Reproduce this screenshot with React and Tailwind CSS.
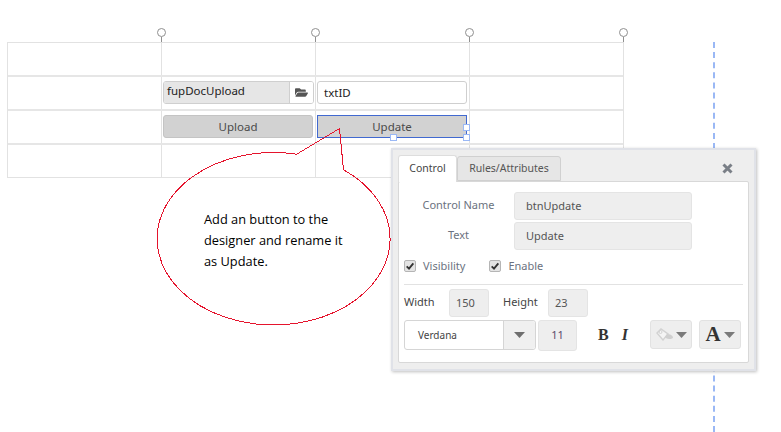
import { useState } from "react";
import { FaFolderOpen } from "react-icons/fa";

const uiFont = "font-['Noto_Sans',sans-serif]";
const columns = [161, 315, 469, 623];

const Caret = ({ color = "#6f6f6f" }) => (
  <svg viewBox="0 0 11 6" className="h-[6px] w-[11px]">
    <path d="M0 0h11L5.5 6z" fill={color} />
  </svg>
);

const Checkbox = ({ label, checked, onChange }) => (
  <label className="flex h-4 items-center gap-[7px]">
    <span className="flex h-3 w-3 items-center justify-center rounded-[2px] border border-[#b5b5b5] bg-[#e4e4e4]">
      <input type="checkbox" checked={checked} onChange={onChange} className="hidden" />
      {checked && (
        <svg viewBox="0 0 12 12" className="h-[10px] w-[10px]">
          <path d="M2 6.5 4.8 9.2 10 2.8" fill="none" stroke="#333" strokeWidth="2.2" />
        </svg>
      )}
    </span>
    <span className="text-[11px] text-[#6b7280]">{label}</span>
  </label>
);

const GridRow = ({ children, className }) => (
  <div className={`grid grid-cols-[154px_154px_154px_154px] ${className}`}>
    <div className="border-r border-[#e2e2e2]" />
    <div className="border-r border-[#e2e2e2]">{children?.[0]}</div>
    <div className="border-r border-[#e2e2e2]">{children?.[1]}</div>
    <div />
  </div>
);

const App = () => {
  const [visible, setVisible] = useState(true);
  const [enabled, setEnabled] = useState(true);

  return (
    <div className={`relative h-[432px] w-[781px] overflow-hidden bg-white ${uiFont}`}>
      {/* Designer table */}
      <div className="ml-[7px] mt-[42px] w-[617px] border border-[#e2e2e2]">
        <GridRow className="h-[34px] border-b-2 border-[#e6e6e6]" />
        <GridRow className="h-[34px] border-b-2 border-[#e6e6e6]">
          <div className="ml-[1px] mt-[4px] flex h-[23px] w-[151px] overflow-hidden rounded-[3px] border border-[#cfcfcf]">
            <div className="flex-1 bg-[#e6e6e6] pl-[3px] text-[11.5px] leading-[18px] text-[#222]">fupDocUpload</div>
            <div className="flex w-[24px] items-center justify-center border-l border-[#cfcfcf] bg-white text-[#555]">
              <FaFolderOpen className="h-[13px] w-[13px]" />
            </div>
          </div>
          <div className="ml-[1px] mt-[4px] h-[23px] w-[150px] rounded-[3px] border border-[#cfcfcf] bg-white pl-[6px] text-[11.5px] leading-[21px] text-[#222]">
            txtID
          </div>
        </GridRow>
        <GridRow className="h-[34px] border-b-2 border-[#e6e6e6]">
          <button className="ml-[1px] mt-[4px] h-[23px] w-[150px] rounded-[3px] border border-[#c4c4c4] bg-[#d2d2d2] text-[11.5px] text-[#4a4a4a]">
            Upload
          </button>
          <button className="ml-[1px] mt-[4px] h-[23px] w-[150px] border border-[#4169d0] bg-[#d2d2d2] text-[11.5px] text-[#4a4a4a]">
            Update
          </button>
        </GridRow>
        <GridRow className="h-[32px]" />
      </div>

      {/* Column handles */}
      {columns.map((x) => (
        <div key={x} className="absolute top-[28px] flex w-[9px] flex-col items-center" style={{ left: x - 4 }}>
          <div className="h-[9px] w-[9px] rounded-full border border-[#8f8f8f] bg-white" />
          <div className="h-[5px] w-px bg-[#8f8f8f]" />
        </div>
      ))}

      {/* Selection handles */}
      <div className="absolute left-[463px] top-[124px] h-[7px] w-[7px] border border-[#9ab8f5] bg-white" />
      <div className="absolute left-[390px] top-[134px] h-[7px] w-[7px] border border-[#9ab8f5] bg-white" />
      <div className="absolute left-[463px] top-[134px] h-[7px] w-[7px] border border-[#9ab8f5] bg-white" />

      {/* Dashed guide */}
      <div className="absolute left-[713px] top-[42px] h-[390px] border-l-2 border-dashed border-[#9ab8f5]" />

      {/* Speech bubble */}
      <svg className="absolute left-0 top-0" width="781" height="432" shapeRendering="crispEdges">
        <path
          d="M296.7 154.2 L339.5 128.5 L343.5 169.75 A116.5 86.25 0 1 1 296.7 154.2 Z"
          fill="none"
          stroke="#e5142d"
        />
      </svg>
      <div className="absolute left-[204px] top-[209px] w-[150px] font-['Open_Sans',sans-serif] text-[12.8px] leading-[21px] text-black">
        Add an button to the
        <br />
        designer and rename it
        <br />
        as Update.
      </div>

      {/* Properties panel */}
      <div className="absolute left-[391px] top-[148px] h-[223px] w-[365px] border-2 border-[#e0e2e8] bg-[#eeeeee] px-[5px] pt-[5px] shadow-[1px_1px_3px_rgba(0,0,0,0.25)]">
        <div className="flex h-[26px] items-end justify-between">
          <div className="flex items-end">
            <div className="relative z-10 -mb-px flex h-[27px] w-[59px] items-center justify-center rounded-t-[3px] border border-b-0 border-[#dddddd] bg-white text-[10.5px] text-[#444]">
              Control
            </div>
            <div className="flex h-[25px] w-[104px] items-center justify-center rounded-t-[3px] border border-[#d0d0d0] bg-[#e6e6e6] text-[10.5px] text-[#555]">
              Rules/Attributes
            </div>
          </div>
          <svg viewBox="0 0 11 11" className="mb-[7px] mr-[16px] h-[11px] w-[11px]">
            <path d="M1.5 1.5l8 8M9.5 1.5l-8 8" stroke="#7a7f87" strokeWidth="3" />
          </svg>
        </div>

        <div className="h-[182px] w-[351px] rounded-[2px] border border-[#d8d8d8] bg-white px-[5px] pt-[10px]">
          <div className="flex flex-col gap-[2px]">
            <div className="flex items-center">
              <span className="ml-[17px] w-[75px] pb-[1px] text-center text-[11px] text-[#6b7280]">Control Name</span>
              <div className="ml-[18px] flex h-[28px] w-[178px] items-center rounded-[3px] border border-[#e4e4e4] bg-[#eeeeee] pl-[11px] text-[11px] text-[#555]">
                btnUpdate
              </div>
            </div>
            <div className="flex items-center">
              <span className="ml-[17px] w-[75px] pb-[1px] text-center text-[11px] text-[#6b7280]">Text</span>
              <div className="ml-[18px] flex h-[28px] w-[178px] items-center rounded-[3px] border border-[#e4e4e4] bg-[#eeeeee] pl-[11px] text-[11px] text-[#555]">
                Update
              </div>
            </div>
          </div>

          <div className="mt-[8px] flex gap-[24px]">
            <Checkbox label="Visibility" checked={visible} onChange={() => setVisible(!visible)} />
            <Checkbox label="Enable" checked={enabled} onChange={() => setEnabled(!enabled)} />
          </div>

          <div className="mt-[10px] h-px w-[339px] bg-[#e2e2e2]" />

          <div className="mt-[4px] flex items-center text-[11px] text-[#444]">
            <span className="w-[45px] pb-[2px]">Width</span>
            <div className="flex h-[28px] w-[40px] items-center rounded-[3px] border border-[#e4e4e4] bg-[#eeeeee] pl-[6px] text-[#555]">150</div>
            <span className="ml-[14px] w-[45px] pb-[2px]">Height</span>
            <div className="flex h-[28px] w-[40px] items-center rounded-[3px] border border-[#e4e4e4] bg-[#eeeeee] pl-[6px] text-[#555]">23</div>
          </div>

          <div className="mt-[3px] flex items-start">
            <div className="flex h-[30px] w-[132px] rounded-[3px] border border-[#d5d5d5] bg-white">
              <div className="flex flex-1 items-center pl-[13px] text-[10px] text-[#444]">Verdana</div>
              <div className="flex w-[32px] items-center justify-center rounded-r-[3px] border-l border-[#d5d5d5] bg-[#f0f0f0]">
                <Caret />
              </div>
            </div>
            <div className="ml-[2px] flex h-[31px] w-[39px] items-center justify-center rounded-[3px] border border-[#e4e4e4] bg-[#eeeeee] text-[11px] text-[#5b4a6a]">
              11
            </div>
            <div className="ml-[21px] mt-[4px] flex w-[30px] justify-between font-['Liberation_Serif',serif] text-[16px] font-bold leading-[22px] text-[#333]">
              <span>B</span>
              <span className="italic">I</span>
            </div>
            <div className="ml-[22px] flex h-[29px] w-[42px] items-center justify-center gap-[2px] rounded-[3px] border border-[#e2e2e2] bg-[#eeeeee]">
              <svg viewBox="0 0 18 13" className="h-[13px] w-[18px]">
                <path d="M1 5 5 1l7 5-5 6z" fill="#f4f4f4" stroke="#d2d2d2" strokeWidth="1.4" />
                <circle cx="4.5" cy="4" r="1.5" fill="none" stroke="#d2d2d2" />
                <path d="M11 6c3 0 5 1 6 3 0 2-3 2-4 2-2 0-3-1-4-2z" fill="#cfcfcf" />
              </svg>
              <Caret color="#7a7a7a" />
            </div>
            <div className="ml-[7px] flex h-[29px] w-[42px] items-center justify-center gap-[3px] rounded-[3px] border border-[#e2e2e2] bg-[#eeeeee]">
              <span className="font-['Liberation_Serif',serif] text-[21px] font-bold leading-none text-[#333]">A</span>
              <Caret color="#7a7a7a" />
            </div>
          </div>
        </div>
      </div>
    </div>
  );
};

export default App;
